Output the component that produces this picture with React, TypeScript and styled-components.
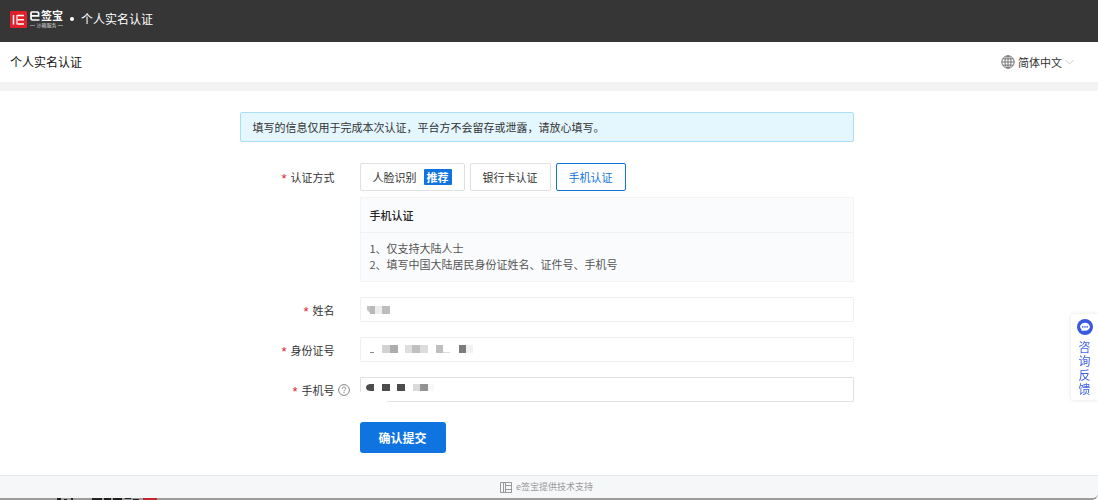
import React from "react";
import styled, { createGlobalStyle, css } from "styled-components";

const primary = "#0f73e0";

const GlobalStyle = createGlobalStyle`
  *, *::before, *::after { box-sizing: border-box; }
  body {
    margin: 0;
    background: #fff;
    color: #333;
    font-family: "Noto Sans CJK SC", "Noto Sans", sans-serif;
    font-size: 11px;
    line-height: 16px;
  }
  button, input, select { font: inherit; color: inherit; }
`;

const Page = styled.div`
  display: flex;
  flex-direction: column;
  min-height: 100vh;
`;

const TopBar = styled.header`
  display: flex;
  align-items: center;
  height: 42px;
  padding: 0 10px 4px;
  background: #363636;
  color: #fff;
`;

const Brand = styled.a`
  display: flex;
  align-items: center;
  gap: 3px;
  color: #fff;
  text-decoration: none;
`;

const BrandWords = styled.span`
  display: flex;
  flex-direction: column;
  gap: 1px;
`;

const BrandName = styled.span`
  display: flex;
  align-items: center;
  gap: 1px;
  font-size: 11px;
  font-weight: 700;
  line-height: 11px;
`;

const BrandNote = styled.span`
  display: flex;
  align-items: center;
  justify-content: center;
  gap: 1px;
  color: #ddd;
  font-size: 5px;
  line-height: 6px;

  &::before, &::after {
    content: "";
    width: 5px;
    height: 1px;
    background: #8a8a8a;
  }
`;

const Dot = styled.span`
  width: 4px;
  height: 4px;
  margin: 0 7px;
  border-radius: 50%;
  background: #fff;
`;

const TopTitle = styled.span`
  font-size: 12px;
`;

const SubBar = styled.div`
  display: flex;
  align-items: center;
  justify-content: space-between;
  height: 49px;
  padding: 0 24px 0 10px;
  border-bottom: 9px solid #f3f3f3;
`;

const PageTitle = styled.h1`
  margin: 0;
  color: #111;
  font-size: 12px;
  font-weight: 400;
`;

const Language = styled.label`
  display: flex;
  align-items: center;
  gap: 3px;
`;

const LanguageSelect = styled.select`
  appearance: none;
  width: 44px;
  padding: 0;
  border: 0;
  background: none;
`;

const Main = styled.main`
  flex: 1;
  padding: 21px 5px 22px 0;
`;

const Form = styled.form`
  display: flex;
  flex-direction: column;
  gap: 15px;
  max-width: 614px;
  margin: 0 auto;
`;

const Notice = styled.p`
  margin: 0 0 6px;
  padding: 6px 12px;
  border: 1px solid #a9def5;
  border-radius: 2px;
  background: #e4f6fe;
`;

const Row = styled.div`
  display: grid;
  grid-template-columns: 95px 25px minmax(0, 1fr);
`;

const labelStyle = css`
  display: flex;
  align-items: center;
  justify-self: end;
  gap: 4px;
  height: 25px;

  &::before {
    content: "*";
    height: 14px;
    color: #e0202c;
    font-family: "Liberation Sans", sans-serif;
    font-size: 13px;
    line-height: 18px;
  }
`;

const Label = styled.label`
  ${labelStyle}
`;

const GroupLabel = styled.span`
  ${labelStyle}
  height: 28px;
`;

const Help = styled.button`
  align-self: center;
  display: flex;
  width: 12px;
  margin-left: 3px;
  padding: 0;
  border: 0;
  background: none;
  cursor: pointer;
`;

const Content = styled.div`
  grid-column: 3;
`;

const Methods = styled.div`
  display: flex;
  gap: 5px;
  margin-bottom: 6px;
`;

const Method = styled.button<{ $active?: boolean }>`
  display: flex;
  align-items: center;
  gap: 7px;
  height: 28px;
  padding: 0 12px;
  border: 1px solid ${(p) => (p.$active ? primary : "#dfdfdf")};
  border-radius: 2px;
  background: #fff;
  color: ${(p) => (p.$active ? primary : "#333")};
  cursor: pointer;
`;

const Recommended = styled.span`
  padding: 0 3px;
  border-radius: 1px;
  background: ${primary};
  color: #fff;
  font-weight: 700;
`;

const Panel = styled.section`
  border: 1px solid #f3f4f6;
  background: #fafbfd;
`;

const PanelTitle = styled.h2`
  margin: 0;
  padding: 9px;
  border-bottom: 1px solid #f1f2f4;
  color: #222;
  font-size: 11px;
  font-weight: 500;
`;

const PanelText = styled.p`
  margin: 0;
  padding: 7px 9px 9px;
  color: #555;
`;

const Field = styled.div`
  position: relative;
`;

const TextInput = styled.input<{ $strong?: boolean }>`
  display: block;
  width: 100%;
  height: 25px;
  padding: 0 7px;
  border: 1px solid ${(p) => (p.$strong ? "#e0e0e0" : "#f0f0f0")};
  border-radius: 1px;
  background: #fff;
`;

const Mosaic = styled.svg`
  position: absolute;
  top: 0;
  left: 0;
  pointer-events: none;
`;

const Submit = styled.button`
  height: 31px;
  margin-top: 5px;
  padding: 0 19px;
  border: 0;
  border-radius: 3px;
  background: ${primary};
  color: #fff;
  font-size: 12px;
  font-weight: 700;
  cursor: pointer;
`;

const Footer = styled.footer`
  position: relative;
  display: flex;
  align-items: center;
  justify-content: center;
  gap: 4px;
  height: 25px;
  padding-right: 5px;
  border-top: 1px solid #e8e8e8;
  border-bottom: 2px solid #9c9c9c;
  border-bottom-right-radius: 6px;
  background: #f6f7f9;
  color: #999;
  font-size: 9px;
`;

const EdgeMarks = styled.svg`
  position: absolute;
  left: 55px;
  bottom: -2px;
`;

const Consult = styled.button`
  position: fixed;
  right: 0;
  bottom: 100px;
  display: flex;
  flex-direction: column;
  align-items: center;
  gap: 5px;
  width: 27px;
  padding: 5px 0 4px;
  border: 0;
  border-radius: 3px 0 0 3px;
  background: #fff;
  box-shadow: 0 0 4px rgba(0, 0, 0, 0.12);
  color: #3f62e8;
  font-size: 12px;
  line-height: 14px;
  cursor: pointer;
`;

const ConsultText = styled.span`
  width: 12px;
`;

type Block = [x: number, y: number, w: number, h: number, fill: string];

const nameBlocks: Block[] = [
  [10, 9, 5, 8, "#b9b9b9"],
  [15, 9, 7, 8, "#ededed"],
  [22, 9, 8, 8, "#bdbdbd"],
];
const idBlocks: Block[] = [
  [10, 15, 4, 1, "#888"],
  [22, 8, 8, 8, "#d2d2d2"],
  [30, 8, 8, 8, "#acacac"],
  [45, 8, 7, 8, "#dedede"],
  [52, 8, 8, 8, "#c0c0c0"],
  [60, 8, 8, 8, "#dcdcdc"],
  [76, 8, 7, 8, "#bfbfbf"],
  [83, 15, 7, 1, "#ddd"],
  [99, 8, 7, 8, "#7b7b7b"],
  [106, 8, 7, 8, "#f2f2f2"],
];
const phoneBlocks: Block[] = [
  [22, 7, 8, 7, "#4c4c4c"],
  [37, 7, 8, 7, "#4c4c4c"],
  [53, 7, 7, 7, "#dadada"],
  [60, 7, 8, 7, "#929292"],
  [68, 7, 6, 7, "#f8f8f8"],
];

const Blocks = ({ items, children }: { items: Block[]; children?: React.ReactNode }) => (
  <Mosaic width="120" height="25" aria-hidden="true">
    {children}
    {items.map(([x, y, w, h, fill]) => (
      <rect key={`${x}-${y}`} x={x} y={y} width={w} height={h} fill={fill} />
    ))}
  </Mosaic>
);

export default function App() {
  return (
    <Page>
      <GlobalStyle />
      <TopBar>
        <Brand href="#">
          <svg width="17" height="17" viewBox="0 0 17 17" aria-hidden="true">
            <rect width="17" height="17" rx="1" fill="#e0202c" />
            <path d="M3.500 4v9.500M7.500 4.600H14M7.500 8.700H14M7.500 12.900H14" stroke="#fff" strokeWidth="1.500" fill="none" />
            <path d="M7 4v9.500" stroke="#fff" strokeWidth="1.200" />
          </svg>
          <BrandWords>
            <BrandName>
              <svg width="10" height="10" viewBox="0 0 10 10" role="img" aria-label="e">
                <path d="M1 4.900h7.600V2.200Q8.600 1 7.400 1H1.800Q1 1 1 2V7.500Q1 9 2.500 9H9.500" stroke="#fff" strokeWidth="1.700" fill="none" />
              </svg>
              签宝
            </BrandName>
            <BrandNote>沙箱服务</BrandNote>
          </BrandWords>
        </Brand>
        <Dot />
        <TopTitle>个人实名认证</TopTitle>
      </TopBar>

      <SubBar>
        <PageTitle>个人实名认证</PageTitle>
        <Language>
          <svg width="14" height="14" viewBox="0 0 14 14" fill="none" stroke="#666" strokeWidth="0.9" aria-hidden="true">
            <circle cx="7" cy="7" r="6.200" />
            <ellipse cx="7" cy="7" rx="3" ry="6.200" />
            <path d="M7 .8v12.400M.8 7h12.400M1.700 3.900h10.600M1.700 10.100h10.600" />
          </svg>
          <LanguageSelect aria-label="语言" defaultValue="zh">
            <option value="zh">简体中文</option>
          </LanguageSelect>
          <svg width="9" height="6" viewBox="0 0 9 6" fill="none" stroke="#ccc" aria-hidden="true">
            <path d="M.5 1l4 4 4-4" />
          </svg>
        </Language>
      </SubBar>

      <Main>
        <Form onSubmit={(e) => e.preventDefault()}>
          <Notice>填写的信息仅用于完成本次认证，平台方不会留存或泄露，请放心填写。</Notice>

          <Row role="group" aria-labelledby="method-label">
            <GroupLabel id="method-label">认证方式</GroupLabel>
            <Content>
              <Methods>
                <Method type="button">
                  人脸识别<Recommended>推荐</Recommended>
                </Method>
                <Method type="button">银行卡认证</Method>
                <Method type="button" $active aria-pressed="true">手机认证</Method>
              </Methods>
              <Panel>
                <PanelTitle>手机认证</PanelTitle>
                <PanelText>
                  1、仅支持大陆人士
                  <br />
                  2、填写中国大陆居民身份证姓名、证件号、手机号
                </PanelText>
              </Panel>
            </Content>
          </Row>

          <Row>
            <Label htmlFor="name">姓名</Label>
            <Content>
              <Field>
                <TextInput id="name" />
                <Blocks items={nameBlocks}>
                  <path d="M7 9h3v7l-3-3z" fill="#c4c4c4" />
                </Blocks>
              </Field>
            </Content>
          </Row>

          <Row>
            <Label htmlFor="id-number">身份证号</Label>
            <Content>
              <Field>
                <TextInput id="id-number" />
                <Blocks items={idBlocks} />
              </Field>
            </Content>
          </Row>

          <Row>
            <Label htmlFor="phone">手机号</Label>
            <Help type="button" aria-label="帮助">
              <svg width="12" height="12" viewBox="0 0 12 12" fill="none" stroke="#777" strokeWidth="0.9">
                <circle cx="6" cy="6" r="5.400" />
                <path d="M4.300 4.800C4.300 2.400 7.800 2.500 7.700 4.600C7.600 5.800 6 5.900 6 7.300M6 8.200v1" />
              </svg>
            </Help>
            <Content>
              <Field>
                <TextInput id="phone" type="tel" $strong />
                <Blocks items={phoneBlocks}>
                  <path d="M0 15h14l14 10H0z" fill="#fff" />
                  <path d="M14 7H10Q6 7.500 6 10.500T10 14H14z" fill="#4c4c4c" />
                </Blocks>
              </Field>
            </Content>
          </Row>

          <Row>
            <Content>
              <Submit type="submit">确认提交</Submit>
            </Content>
          </Row>
        </Form>
      </Main>

      <Footer>
        <svg width="12" height="11" viewBox="0 0 12 11" fill="none" stroke="#999" aria-hidden="true">
          <path d="M.5.5h11v10H.5zM3.500.5v10M5.500 3.500h6M5.500 7.500h6M5.500.5v10" />
        </svg>
        e签宝提供技术支持
        <EdgeMarks width="110" height="2" aria-hidden="true">
          <path d="M2 0h4v2H2zM9 1h3v1H9zM16 0h2v2h-2zM37 0h10v2H37zM49 0h7v2h-7zM58 0h9v2h-9zM70 0h6v1h-6zM78 1h6v1h-6z" fill="#222" />
          <path d="M88 0h14v2H88z" fill="#c9252d" />
        </EdgeMarks>
      </Footer>

      <Consult type="button">
        <svg width="16" height="16" viewBox="0 0 16 16" aria-hidden="true">
          <circle cx="8" cy="8" r="8" fill="#3858e0" />
          <path d="M8 3.800c2.900 0 4.900 1.700 4.900 4s-2 4-4.900 4H4.200l.4-1.400C3.600 9.700 3.100 8.800 3.100 7.800c0-2.300 2-4 4.900-4z" fill="#fff" />
          <circle cx="5.800" cy="7.900" r=".8" fill="#3858e0" />
          <circle cx="8" cy="7.900" r=".8" fill="#3858e0" />
          <circle cx="10.200" cy="7.900" r=".8" fill="#3858e0" />
        </svg>
        <ConsultText>咨询反馈</ConsultText>
      </Consult>
    </Page>
  );
}
